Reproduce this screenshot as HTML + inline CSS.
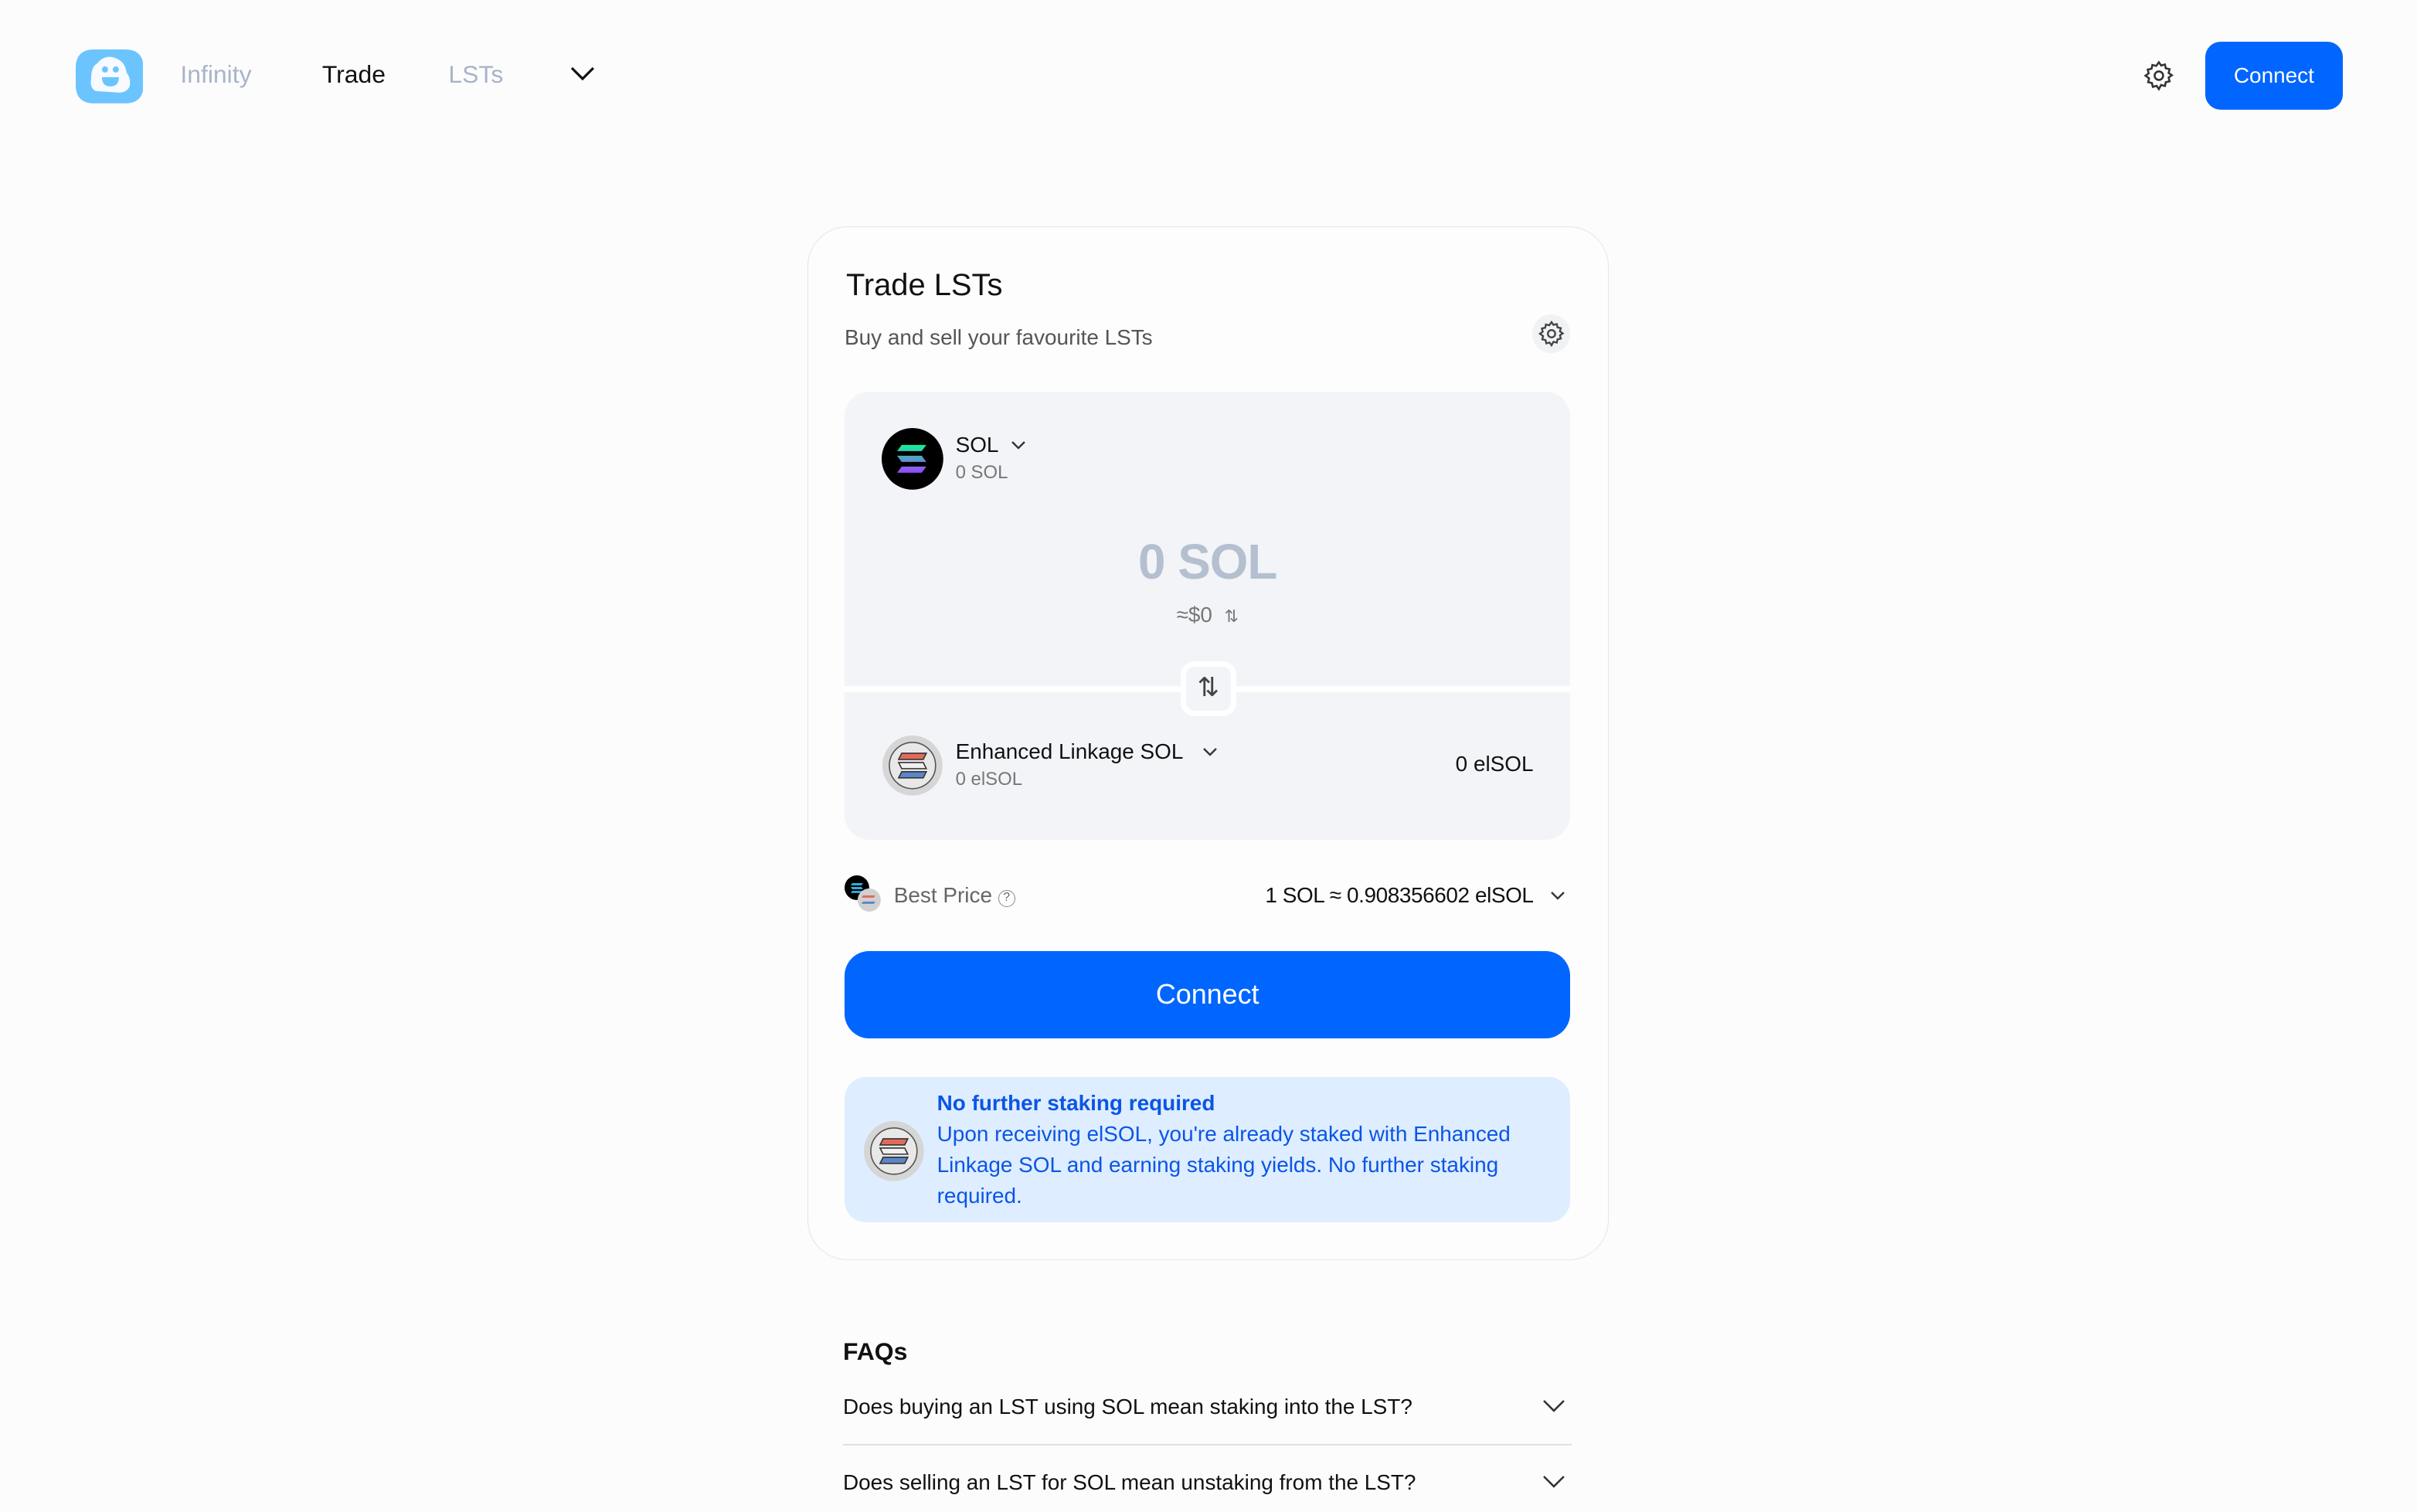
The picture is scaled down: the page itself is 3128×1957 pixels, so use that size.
<!DOCTYPE html>
<html><head><meta charset="utf-8"><style>
html{zoom:1.9945}
*{box-sizing:border-box;margin:0;padding:0}
body{width:1568px;height:981px;background:#fcfcfd;font-family:"Liberation Sans",sans-serif;color:#111;position:relative;overflow:hidden}
.a{position:absolute}
.nav{font-size:16px;top:39px}
.card{left:524px;top:147px;width:520px;height:671px;border:1px solid #e3e5ea;border-radius:26px;background:#fdfdfe}
.box{left:548px;top:254px;width:471px;height:291px;background:#f2f4f8;border-radius:16px;overflow:hidden}
</style></head><body>
<!-- nav -->
<svg class="a" style="left:49px;top:31px" width="44" height="36" viewBox="0 0 44 36">
<path d="M12 1 H32 Q44 1 44 13 V24 Q44 36 32 36 H12 Q0 36 0 24 V13 Q0 1 12 1Z" fill="#6cc4ff"/>
<path d="M13 28 Q9 26 10 20 Q10 12 14 10 Q18 5 24 6 Q32 8 33 16 Q36 20 35 25 Q33 29 28 29Z" fill="#f7fbff"/>
<circle cx="19" cy="14" r="2" fill="#6cc4ff"/><circle cx="26" cy="14" r="2" fill="#6cc4ff"/>
<path d="M17 19 H28 Q28 25 22.5 25 Q17 25 17 19Z" fill="#6cc4ff"/>
</svg>
<div class="a nav" style="left:117px;color:#a8b4c8">Infinity</div>
<div class="a nav" style="left:209px;color:#111">Trade</div>
<div class="a nav" style="left:291px;color:#a8b4c8">LSTs</div>
<svg class="a" style="left:370px;top:43px" width="16" height="10" viewBox="0 0 16 10"><path d="M1 1 L8 8 L15 1" fill="none" stroke="#111" stroke-width="1.6"/></svg>
<svg class="a" style="left:1390px;top:38px" width="22" height="22" viewBox="0 0 24 24" fill="none" stroke="#333" stroke-width="1.4"><circle cx="12" cy="12" r="3"/><path d="M12 2.5l1.6 2.3 2.7-.7.6 2.7 2.7.6-.7 2.7 2.3 1.6-2.3 1.6.7 2.7-2.7.6-.6 2.7-2.7-.7L12 21.5l-1.6-2.3-2.7.7-.6-2.7-2.7-.6.7-2.7L2.5 12l2.3-1.6-.7-2.7 2.7-.6.6-2.7 2.7.7z"/></svg>
<div class="a" style="left:1431px;top:27px;width:89px;height:44px;background:#0066ff;border-radius:10px;color:#fff;font-size:14px;line-height:44px;text-align:center">Connect</div>

<!-- card -->
<div class="a card"></div>
<div class="a" style="left:549px;top:174px;font-size:20px">Trade LSTs</div>
<div class="a" style="left:548px;top:211px;font-size:14px;color:#555">Buy and sell your favourite LSTs</div>
<div class="a" style="left:994px;top:204px;width:25px;height:25px;border-radius:50%;background:#f0f2f5"></div>
<svg class="a" style="left:997px;top:207px" width="19" height="19" viewBox="0 0 24 24" fill="none" stroke="#444" stroke-width="1.5"><circle cx="12" cy="12" r="3"/><path d="M12 2.5l1.6 2.3 2.7-.7.6 2.7 2.7.6-.7 2.7 2.3 1.6-2.3 1.6.7 2.7-2.7.6-.6 2.7-2.7-.7L12 21.5l-1.6-2.3-2.7.7-.6-2.7-2.7-.6.7-2.7L2.5 12l2.3-1.6-.7-2.7 2.7-.6.6-2.7 2.7.7z"/></svg>

<div class="a box">
  <div class="a" style="left:0;top:191px;width:471px;height:4px;background:#fff"></div>
</div>
<svg class="a" style="left:572px;top:278px" width="40" height="40" viewBox="0 0 40 40">
<circle cx="20" cy="20" r="20" fill="#000"/>
<defs><linearGradient id="g" x1="0" y1="0" x2="0" y2="1"><stop offset="0" stop-color="#14f195"/><stop offset="1" stop-color="#9945ff"/></linearGradient></defs>
<path d="M13 11 H29 L26 15 H10Z M10 18 H26 L29 22 H13Z M13 25 H29 L26 29 H10Z" fill="url(#g)"/>
</svg>
<div class="a" style="left:620px;top:281px;font-size:14px">SOL</div>
<svg class="a" style="left:656px;top:286px" width="10" height="7" viewBox="0 0 10 7"><path d="M1 1 L5 5 L9 1" fill="none" stroke="#333" stroke-width="1.2"/></svg>
<div class="a" style="left:620px;top:300px;font-size:12px;color:#777">0 SOL</div>
<div class="a" style="left:548px;width:471px;top:346px;text-align:center;font-size:32px;color:#b4bfd0;font-weight:bold;letter-spacing:-0.5px">0 SOL</div>
<div class="a" style="left:548px;width:471px;top:391px;text-align:center;font-size:14px;color:#777">≈$0 &nbsp;<span style="font-size:11px">⇅</span></div>
<div class="a" style="left:766px;top:429px;width:36px;height:36px;border:4px solid #fff;border-radius:9px;background:#f2f4f8;text-align:center;line-height:28px;font-size:17px;color:#444">⇅</div>

<svg class="a" style="left:572px;top:477px" width="40" height="40" viewBox="0 0 40 40">
<circle cx="20" cy="20" r="19.5" fill="#d6d6d6"/><circle cx="20" cy="20" r="15" fill="#e8e8e8" stroke="#555" stroke-width=".8"/>
<path d="M13 12 H29 L27 16 H11Z" fill="#e26a5a" stroke="#333" stroke-width=".8"/>
<path d="M11 18 H27 L29 22 H13Z" fill="#f0f0f0" stroke="#333" stroke-width=".8"/>
<path d="M13 24 H29 L27 28 H11Z" fill="#5b86c8" stroke="#333" stroke-width=".8"/>
</svg>
<div class="a" style="left:620px;top:480px;font-size:14px">Enhanced Linkage SOL</div>
<svg class="a" style="left:780px;top:485px" width="10" height="7" viewBox="0 0 10 7"><path d="M1 1 L5 5 L9 1" fill="none" stroke="#333" stroke-width="1.2"/></svg>
<div class="a" style="left:620px;top:499px;font-size:12px;color:#777">0 elSOL</div>
<div class="a" style="left:900px;width:95px;text-align:right;top:488px;font-size:14px">0 elSOL</div>

<!-- best price -->
<svg class="a" style="left:548px;top:568px" width="24" height="24" viewBox="0 0 24 24">
<circle cx="8" cy="8" r="8" fill="#000"/><path d="M5 5h7l-1 1.5H4z M4 7.5h7l1 1.5H5z M5 10h7l-1 1.5H4z" fill="#3ad"/>
<circle cx="16" cy="16" r="7.5" fill="#d0d0d0"/><path d="M12 13h8l-1 1.5h-8z" fill="#e26a5a"/><path d="M12 17h8l-1 1.5h-8z" fill="#5b86c8"/>
</svg>
<div class="a" style="left:580px;top:573px;font-size:14px;color:#666">Best Price <span style="display:inline-block;width:11px;height:11px;border:1px solid #888;border-radius:50%;font-size:8px;line-height:9px;text-align:center;vertical-align:1px">?</span></div>
<div class="a" style="left:760px;width:235px;text-align:right;top:573px;font-size:14px;letter-spacing:-0.2px">1 SOL ≈ 0.908356602 elSOL</div>
<svg class="a" style="left:1006px;top:578px" width="10" height="7" viewBox="0 0 10 7"><path d="M1 1 L5 5 L9 1" fill="none" stroke="#333" stroke-width="1.2"/></svg>

<div class="a" style="left:548px;top:617px;width:471px;height:57px;background:#0066ff;border-radius:16px;color:#fff;font-size:18px;line-height:57px;text-align:center">Connect</div>

<div class="a" style="left:548px;top:699px;width:471px;height:94px;background:#deedff;border-radius:14px"></div>
<svg class="a" style="left:560px;top:727px" width="40" height="40" viewBox="0 0 40 40">
<circle cx="20" cy="20" r="19.5" fill="#d6d6d6"/><circle cx="20" cy="20" r="15" fill="#e8e8e8" stroke="#555" stroke-width=".8"/>
<path d="M13 12 H29 L27 16 H11Z" fill="#e26a5a" stroke="#333" stroke-width=".8"/>
<path d="M11 18 H27 L29 22 H13Z" fill="#f0f0f0" stroke="#333" stroke-width=".8"/>
<path d="M13 24 H29 L27 28 H11Z" fill="#5b86c8" stroke="#333" stroke-width=".8"/>
</svg>
<div class="a" style="left:608px;top:706px;width:400px;font-size:14px;line-height:20px;color:#0b55e6"><span style="font-weight:bold">No further staking required</span><br>Upon receiving elSOL, you're already staked with Enhanced Linkage SOL and earning staking yields. No further staking required.</div>

<!-- FAQ -->
<div class="a" style="left:547px;top:868px;font-size:16px;font-weight:bold">FAQs</div>
<div class="a" style="left:547px;top:905px;font-size:14px">Does buying an LST using SOL mean staking into the LST?</div>
<svg class="a" style="left:1001px;top:908px" width="15" height="9" viewBox="0 0 15 9"><path d="M1 1 L7.5 7.5 L14 1" fill="none" stroke="#333" stroke-width="1.3"/></svg>
<div class="a" style="left:547px;top:937px;width:473px;height:1px;background:#dde0e5"></div>
<div class="a" style="left:547px;top:954px;font-size:14px">Does selling an LST for SOL mean unstaking from the LST?</div>
<svg class="a" style="left:1001px;top:957px" width="15" height="9" viewBox="0 0 15 9"><path d="M1 1 L7.5 7.5 L14 1" fill="none" stroke="#333" stroke-width="1.3"/></svg>
</body></html>
